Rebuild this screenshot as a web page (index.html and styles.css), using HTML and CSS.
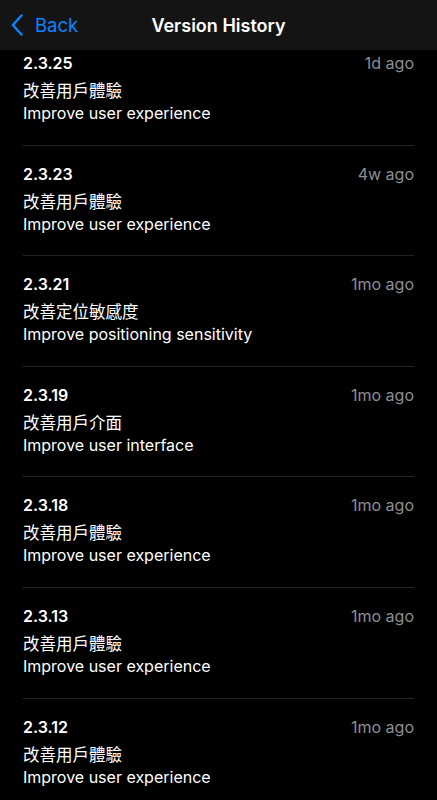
FILE: index.html
```html
<!DOCTYPE html>
<html lang="en">
<head>
  <meta charset="UTF-8">
  <meta name="viewport" content="width=device-width, initial-scale=1.0">
  <title>Version History</title>
  <link rel="stylesheet" href="styles.css">
</head>
<body>
  <header class="nav-bar">
    <a class="back-link" href="#">
      <svg class="back-chevron" width="14" height="22" viewBox="0 0 14 22">
        <path d="M11.5 1.5 L2.8 11 L11.5 20.5" fill="none" stroke="#0a84ff" stroke-width="2.4" stroke-linecap="round" stroke-linejoin="round"/>
      </svg>
      <span>Back</span>
    </a>
    <h1 class="nav-title">Version History</h1>
  </header>

  <ul class="version-list">
    <li class="version-item">
      <div class="version-head"><span class="version-num">2.3.25</span><span class="version-age">1d ago</span></div>
      <p class="note-zh">改善用戶體驗</p>
      <p class="note-en">Improve user experience</p>
    </li>
    <li class="version-item">
      <div class="version-head"><span class="version-num">2.3.23</span><span class="version-age">4w ago</span></div>
      <p class="note-zh">改善用戶體驗</p>
      <p class="note-en">Improve user experience</p>
    </li>
    <li class="version-item">
      <div class="version-head"><span class="version-num">2.3.21</span><span class="version-age">1mo ago</span></div>
      <p class="note-zh">改善定位敏感度</p>
      <p class="note-en">Improve positioning sensitivity</p>
    </li>
    <li class="version-item">
      <div class="version-head"><span class="version-num">2.3.19</span><span class="version-age">1mo ago</span></div>
      <p class="note-zh">改善用戶介面</p>
      <p class="note-en">Improve user interface</p>
    </li>
    <li class="version-item">
      <div class="version-head"><span class="version-num">2.3.18</span><span class="version-age">1mo ago</span></div>
      <p class="note-zh">改善用戶體驗</p>
      <p class="note-en">Improve user experience</p>
    </li>
    <li class="version-item">
      <div class="version-head"><span class="version-num">2.3.13</span><span class="version-age">1mo ago</span></div>
      <p class="note-zh">改善用戶體驗</p>
      <p class="note-en">Improve user experience</p>
    </li>
    <li class="version-item">
      <div class="version-head"><span class="version-num">2.3.12</span><span class="version-age">1mo ago</span></div>
      <p class="note-zh">改善用戶體驗</p>
      <p class="note-en">Improve user experience</p>
    </li>
  </ul>
</body>
</html>
```

FILE: styles.css
```css
body {
  margin: 0;
  height: 100vh;
  overflow: hidden;
  background-color: #000;
  color: #fff;
  font-family: Inter, "Noto Sans CJK TC", sans-serif;
}

/* Top navigation bar */
.nav-bar {
  position: fixed;
  top: 0;
  left: 0;
  right: 0;
  z-index: 10;
  height: 50px;
  display: flex;
  align-items: center;
  justify-content: center;
  background-color: #141414;
}

.back-link {
  position: absolute;
  left: 10px;
  top: 0;
  height: 50px;
  display: flex;
  align-items: center;
  gap: 11px;
  color: #0a84ff;
  text-decoration: none;
  font-size: 18.5px;
}

.nav-title {
  margin: 0;
  font-size: 18px;
  font-weight: 600;
}

/* List */
.version-list {
  list-style: none;
  margin: 0;
  padding: 35px 23px 0;
}

.version-item {
  padding: 18px 0 20.6px;
  border-bottom: 1px solid #242424;
}

.version-head {
  display: flex;
  justify-content: space-between;
  align-items: center;
  height: 20px;
}

.version-num {
  font-size: 16px;
  font-weight: 600;
}

.version-age {
  font-size: 16px;
  color: #8e8e93;
}

.note-zh {
  margin: 7px 0 0;
  font-size: 16.5px;
  line-height: 22px;
}

.note-en {
  margin: 0;
  font-size: 16px;
  line-height: 22px;
}
```
